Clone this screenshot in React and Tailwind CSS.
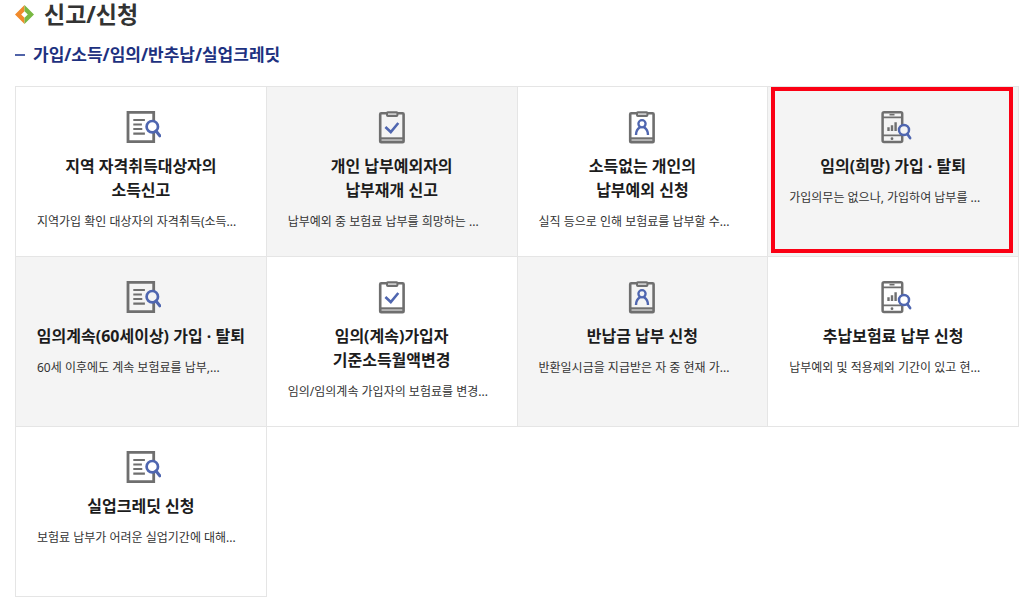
const GRAY = '#6f6f6f';
const BLUE = '#4f66b0';

function DocumentSearchIcon() {
    return (
        <svg className="w-10 h-9" viewBox="0 0 40 36" fill="none" aria-hidden="true">
            <path d="M32.7 13V3.3H7v29.4h25.7V23" stroke={GRAY} strokeWidth="2.8" />
            <path d="M12.3 11h11.6M12.3 15.5h8.6M12.3 20h9M12.3 24.7h11.6" stroke={GRAY} strokeWidth="2.2" />
            <circle cx="31.3" cy="17.7" r="5.7" stroke={BLUE} strokeWidth="2.7" />
            <path d="M35 22l3.8 4.8" stroke={BLUE} strokeWidth="3" strokeLinecap="round" />
        </svg>
    );
}

function ClipboardShape({ children }) {
    return (
        <svg className="w-10 h-9" viewBox="0 0 40 36" fill="none" aria-hidden="true">
            <path d="M8.2 29.2h23.4v4H8.2z" fill="#b5b5b5" />
            <rect x="8.2" y="4.2" width="23.4" height="29" rx="1" stroke={GRAY} strokeWidth="2.6" />
            <path d="M8 29.2h24" stroke={GRAY} strokeWidth="1.8" />
            <rect x="15" y="3.2" width="10.4" height="3.8" rx="0.8" fill="#cccccc" stroke={GRAY} strokeWidth="2" />
            {children}
        </svg>
    );
}

function ClipboardCheckIcon() {
    return (
        <ClipboardShape>
            <path d="M13.4 18l5.4 5 7.5-9" stroke={BLUE} strokeWidth="2.6" />
        </ClipboardShape>
    );
}

function ClipboardUserIcon() {
    return (
        <ClipboardShape>
            <circle cx="20" cy="14.8" r="3.6" stroke={BLUE} strokeWidth="2.3" />
            <path d="M14 26c0-4.200 1.500-6.300 4-7.800M26 26c0-4.200-1.500-6.300-4-7.800" stroke={BLUE} strokeWidth="2.400" />
        </ClipboardShape>
    );
}

function MobileSearchIcon() {
    return (
        <svg className="w-10 h-9" viewBox="0 0 40 36" fill="none" aria-hidden="true">
            <path d="M29.2 16.500V4.800a1.500 1.500 0 0 0-1.500-1.500H11.100a1.500 1.500 0 0 0-1.500 1.500v26.800a1.500 1.500 0 0 0 1.500 1.500h16.600a1.500 1.500 0 0 0 1.500-1.500V25.500" stroke={GRAY} strokeWidth="2.500" />
            <path d="M9.600 8.400h19.600M9.600 26.400h19.600" stroke={GRAY} strokeWidth="1.800" />
            <path d="M16.500 5.700h5" stroke={GRAY} strokeWidth="1.600" />
            <circle cx="19" cy="29.700" r="1.400" fill={GRAY} />
            <path d="M15.500 18.300v3.700M19 16.300v5.700M22.600 13.300v8.700" stroke={GRAY} strokeWidth="2.400" />
            <circle cx="31" cy="21" r="5" stroke={BLUE} strokeWidth="2.500" />
            <path d="M34.300 24.900l2.800 4.200" stroke={BLUE} strokeWidth="2.700" strokeLinecap="round" />
        </svg>
    );
}

const services = [
    { title: ['지역 자격취득대상자의', '소득신고'], desc: '지역가입 확인 대상자의 자격취득(소득...', Icon: DocumentSearchIcon },
    { title: ['개인 납부예외자의', '납부재개 신고'], desc: '납부예외 중 보험료 납부를 희망하는 ...', Icon: ClipboardCheckIcon, shaded: true },
    { title: ['소득없는 개인의', '납부예외 신청'], desc: '실직 등으로 인해 보험료를 납부할 수...', Icon: ClipboardUserIcon },
    { title: ['임의(희망) 가입 · 탈퇴'], desc: '가입의무는 없으나, 가입하여 납부를 ...', Icon: MobileSearchIcon, shaded: true, highlighted: true },
    { title: ['임의계속(60세이상) 가입 · 탈퇴'], desc: '60세 이후에도 계속 보험료를 납부,...', Icon: DocumentSearchIcon, shaded: true },
    { title: ['임의(계속)가입자', '기준소득월액변경'], desc: '임의/임의계속 가입자의 보험료를 변경...', Icon: ClipboardCheckIcon },
    { title: ['반납금 납부 신청'], desc: '반환일시금을 지급받은 자 중 현재 가...', Icon: ClipboardUserIcon, shaded: true },
    { title: ['추납보험료 납부 신청'], desc: '납부예외 및 적용제외 기간이 있고 현...', Icon: MobileSearchIcon },
    { title: ['실업크레딧 신청'], desc: '보험료 납부가 어려운 실업기간에 대해...', Icon: DocumentSearchIcon },
];

function ServiceCard({ title, desc, Icon, shaded, highlighted }) {
    return (
        <li className={`relative border-r border-b border-[#e5e5e5] ${shaded ? 'bg-[#f4f4f4]' : 'bg-white'}`}>
            <a href="#" className="flex flex-col items-center pt-[22px] pb-6">
                <Icon />
                <strong className="mt-[9px] text-base leading-6 font-bold text-center text-[#1c1c1c]">
                    {title.map((line) => (
                        <span key={line} className="block whitespace-nowrap">{line}</span>
                    ))}
                </strong>
                <span className="mt-2.5 w-full px-[21px] text-xs leading-5 whitespace-nowrap text-[#333333]">{desc}</span>
            </a>
            {/* Red marker around the selected service */}
            {highlighted && (
                <div className="absolute top-0 bottom-[3px] left-[3px] right-[5px] border-4 border-[#fb0014] pointer-events-none" />
            )}
        </li>
    );
}

export default function App() {
    return (
        <main className="bg-white pl-[15px] pr-2.5 pb-2 font-['Noto_Sans','Noto_Sans_CJK_KR',sans-serif]">
            <h1 className="flex items-center gap-2.5 h-7 text-[23px] leading-7 font-bold text-[#333333]">
                <svg className="w-[19px] h-[19px] shrink-0" viewBox="0 0 20 20" aria-hidden="true">
                    <path d="M10 0L0 10l10 10v-6.500L6.500 10 10 6.500z" fill="#f08a2c" />
                    <path d="M10 0l10 10-10 10v-6.500l3.500-3.500L10 6.500z" fill="#78b843" />
                </svg>
                신고/신청
            </h1>
            <h2 className="flex items-center gap-2 mt-[15px] h-6 text-[17px] leading-6 font-bold text-[#1d3180]">
                <span className="w-2.5 h-0.5 bg-[#5063a8]" />
                가입/소득/임의/반추납/실업크레딧
            </h2>
            <ul className="mt-[19px] grid grid-cols-4 auto-rows-[minmax(170px,auto)] border-t border-l border-[#e5e5e5]">
                {services.map((service) => (
                    <ServiceCard key={service.title[0]} {...service} />
                ))}
            </ul>
        </main>
    );
}
